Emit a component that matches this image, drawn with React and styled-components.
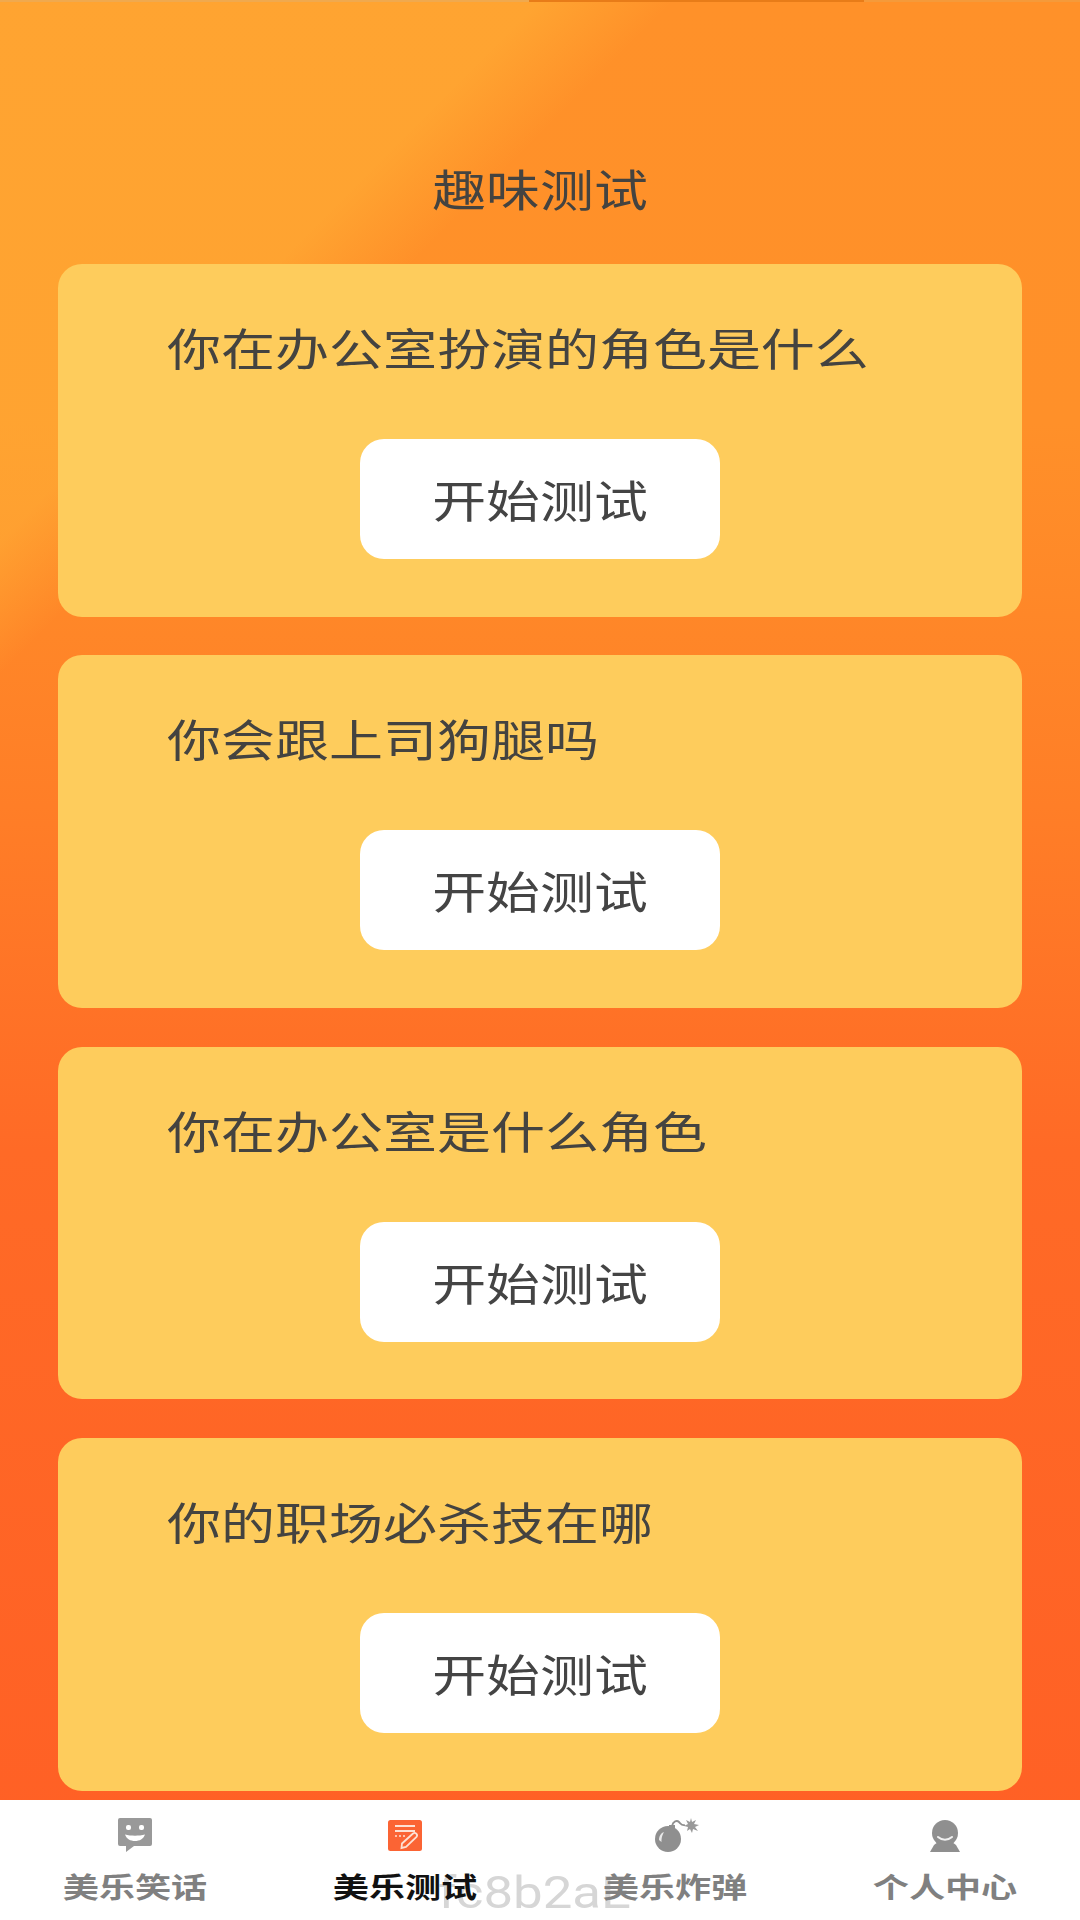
import React from "react";
import styled, { createGlobalStyle } from "styled-components";

const Global = createGlobalStyle`
  html, body { margin: 0; padding: 0; }
  body { font-family: "Noto Sans CJK SC", "Noto Sans", sans-serif; }
`;

const Screen = styled.div`
  width: 1080px;
  height: 1920px;
  display: flex;
  flex-direction: column;
  overflow: hidden;
  background:
    linear-gradient(135deg, rgba(255, 190, 60, 0.42) 0%, rgba(255, 190, 60, 0.42) 18%, rgba(255, 190, 60, 0) 22.5%),
    linear-gradient(180deg, #ff9129 0%, #ff9029 22%, #ff7e27 42%, #ff6a26 60%, #ff5f25 100%);
`;

const TopEdge = styled.div`
  height: 2px;
  flex: none;
  background: linear-gradient(90deg, #f0a94e 0, #f0a94e 49%, #e87c18 49%, #e87c18 80%, #f59a3a 80%, #f59a3a 100%);
`;

const Main = styled.main`
  flex: 1;
  display: flex;
  flex-direction: column;
  gap: 38.5px;
  padding: 0 58px;
  min-height: 0;
`;

const Title = styled.h1`
  margin: 0;
  height: 262px;
  padding-top: 154px;
  box-sizing: border-box;
  margin-bottom: -38.5px;
  text-align: center;
  font-size: 44px;
  line-height: 64px;
  font-weight: 400;
  color: #444340;
  transform: scaleX(1.225);
`;

const Card = styled.section`
  height: 352.8px;
  flex: none;
  box-sizing: border-box;
  padding: 51px 0 0 109px;
  background: #fecc5c;
  border-radius: 24px;
  display: flex;
  flex-direction: column;
`;

const Question = styled.div`
  font-size: 44px;
  line-height: 64px;
  color: #444340;
  white-space: nowrap;
  transform: scaleX(1.227);
  transform-origin: left center;
`;

const StartButton = styled.button`
  width: 360px;
  height: 120px;
  margin: 60px 0 0 193px;
  padding: 0;
  border: 0;
  border-radius: 24px;
  background: #fff;
  color: #444;
  font: inherit;
  font-size: 44px;
  line-height: 64px;
  display: flex;
  align-items: center;
  justify-content: center;
`;

const ButtonLabel = styled.span`
  display: block;
  white-space: nowrap;
  transform: scaleX(1.225);
`;

const Nav = styled.nav`
  position: relative;
  flex: none;
  height: 120px;
  background: #fff;
  display: grid;
  grid-template-columns: repeat(4, 270px);
`;

const Ghost = styled.div`
  position: absolute;
  left: 438px;
  top: 63px;
  font-family: "Roboto", sans-serif;
  font-size: 44px;
  line-height: 60px;
  color: #d6d6d6;
  white-space: nowrap;
  transform: scaleX(1.2);
  transform-origin: left center;
`;

const NavItem = styled.div`
  position: relative;
  display: flex;
  flex-direction: column;
  align-items: center;
  color: ${(p) => (p.$active ? "#111" : "#808080")};
`;

const IconSlot = styled.div`
  height: 56px;
  padding-top: 17px;
  width: 60px;
  display: flex;
  justify-content: center;
  svg { display: block; }
`;

const NavLabel = styled.div`
  margin-top: -7px;
  font-size: 28px;
  line-height: 40px;
  font-weight: 700;
  white-space: nowrap;
  transform: scaleX(1.29);
`;

const ChatIcon = () => (
  <svg width="36" height="36" viewBox="0 0 36 36">
    <path fill="#999" d="M3 1h30a2 2 0 0 1 2 2v24a2 2 0 0 1-2 2H17l-8 6v-6H3a2 2 0 0 1-2-2V3a2 2 0 0 1 2-2z" />
    <rect x="9" y="8" width="5" height="5" rx="2" fill="#fff" />
    <rect x="22" y="8" width="5" height="5" rx="2" fill="#fff" />
    <path fill="#fff" d="M8 17.500c6 1.600 14 1.600 20 0-1.500 4.500-5.500 6.500-10 6.500s-8.500-2-10-6.500z" />
  </svg>
);

const PenIcon = () => (
  <svg width="34" height="31" viewBox="0 0 34 31" style={{ marginTop: 3 }}>
    <rect width="34" height="31" rx="2.500" fill="#fb6434" />
    <path stroke="#fde1d4" strokeWidth="1.800" d="M7 6h20M7 11h20" />
    <path stroke="#fde1d4" strokeWidth="1.500" strokeDasharray="2 2" d="M7 16h11" />
    <path fill="none" stroke="#fde1d4" strokeWidth="1.800" d="M14 23.500 25 13.500a2.500 2.500 0 0 1 3.500 3.500L18 27l-4.500 1z" />
  </svg>
);

const BombIcon = () => (
  <svg width="46" height="34" viewBox="0 0 46 34" style={{ marginTop: 1, marginLeft: 2 }}>
    <circle cx="15" cy="21" r="13" fill="#8f8f8f" />
    <path fill="#8f8f8f" d="M16 7h6v4h-6z" />
    <path fill="#e8e8e8" d="M6 22c0-4 2-7 5-8-1.500 3-2.500 5-2.500 10z" />
    <path fill="none" stroke="#8f8f8f" strokeWidth="1.800" d="M19 8c1-5 5-6 7-4s3 4 6 3" />
    <path fill="#999" d="M38 0l1 4 4-2-2 4 5 1-4 2 3 4-5-2-1 4-2-4-3 2 1-4-4-1 4-2-2-4 4 2z" />
  </svg>
);

const PersonIcon = () => (
  <svg width="32" height="32" viewBox="0 0 32 32" style={{ marginTop: 3 }}>
    <circle cx="16" cy="13" r="13" fill="#8f8f8f" />
    <path fill="#8f8f8f" d="M9 22h14l4 3 4 7H1l4-7z" />
    <path fill="none" stroke="#f0f0f0" strokeWidth="2" strokeLinecap="round" d="M9 17c4 3.500 10 3.500 14 0" />
  </svg>
);

const questions = [
  "你在办公室扮演的角色是什么",
  "你会跟上司狗腿吗",
  "你在办公室是什么角色",
  "你的职场必杀技在哪",
];

const tabs = [
  { label: "美乐笑话", Icon: ChatIcon },
  { label: "美乐测试", Icon: PenIcon, active: true },
  { label: "美乐炸弹", Icon: BombIcon },
  { label: "个人中心", Icon: PersonIcon },
];

export default function App() {
  return (
    <Screen>
      <Global />
      <TopEdge />
      <Main>
        <Title>趣味测试</Title>
        {questions.map((q) => (
          <Card key={q}>
            <Question>{q}</Question>
            <StartButton>
              <ButtonLabel>开始测试</ButtonLabel>
            </StartButton>
          </Card>
        ))}
      </Main>
      <Nav>
        <Ghost>fc8b2aE</Ghost>
        {tabs.map(({ label, Icon, active }) => (
          <NavItem key={label} $active={active}>
            <IconSlot>
              <Icon />
            </IconSlot>
            <NavLabel>{label}</NavLabel>
          </NavItem>
        ))}
      </Nav>
    </Screen>
  );
}
